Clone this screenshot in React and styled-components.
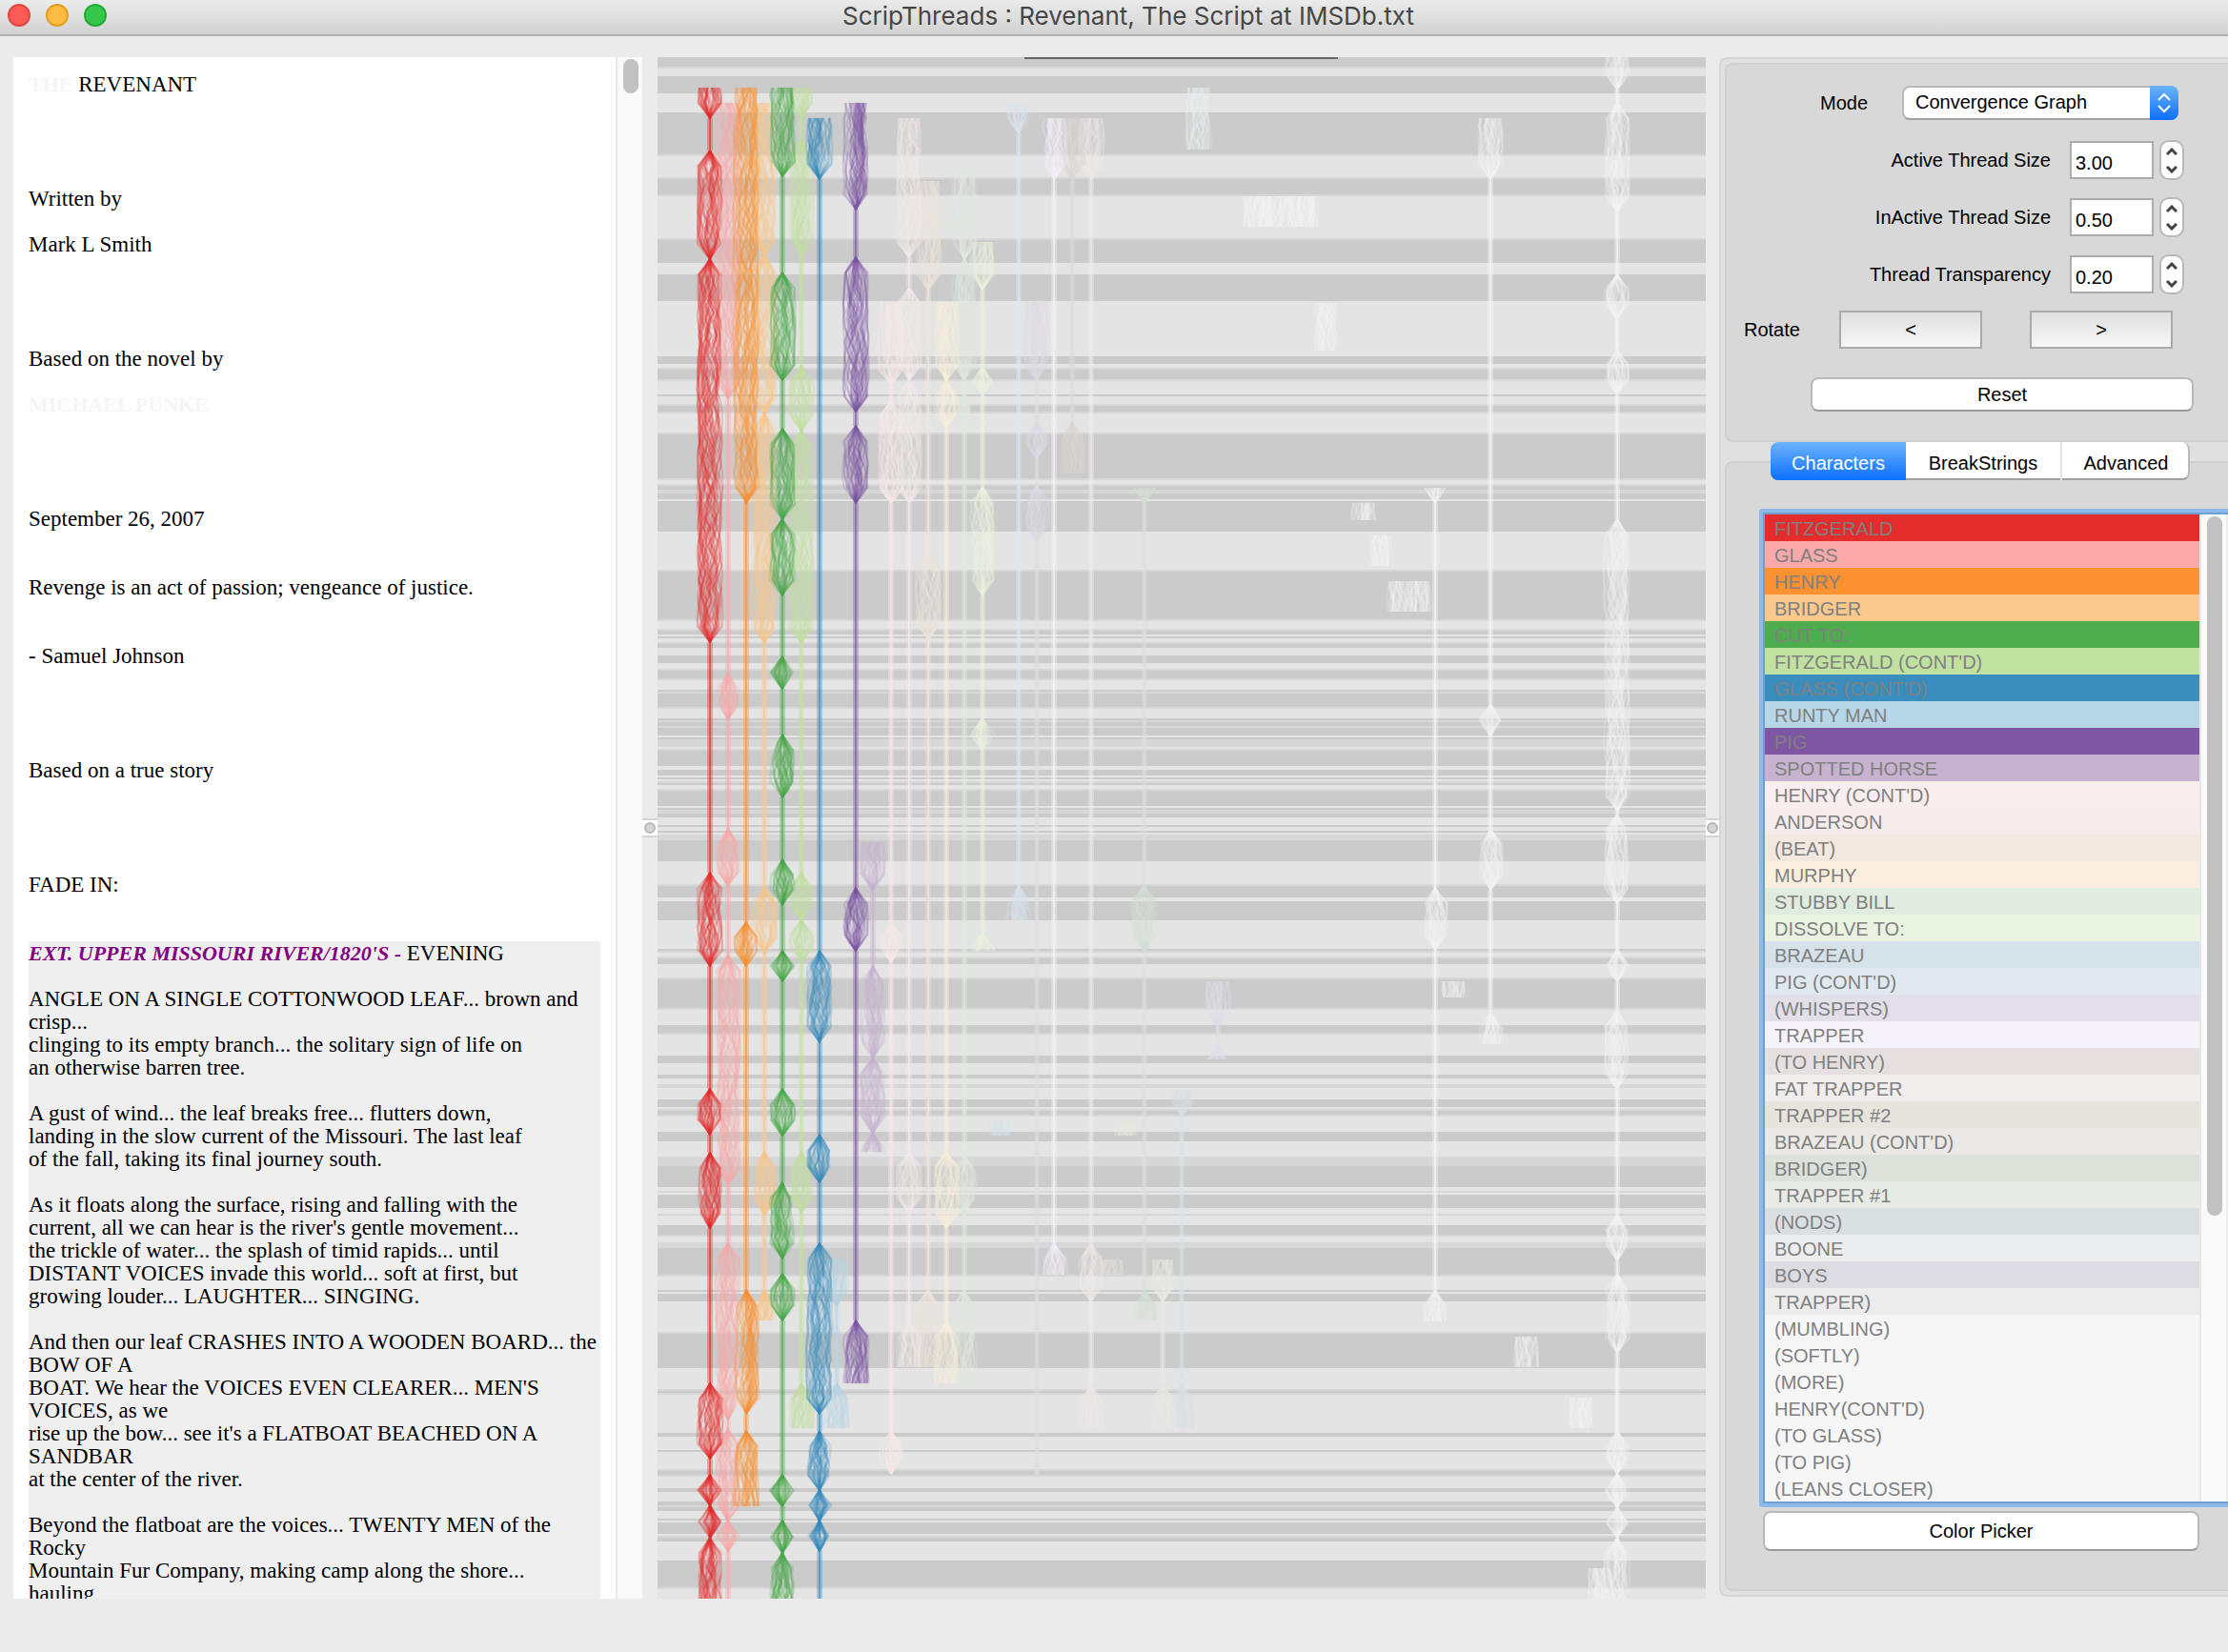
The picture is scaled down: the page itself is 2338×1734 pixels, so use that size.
import React from 'react';
import styled, { createGlobalStyle } from 'styled-components';

const GlobalStyle = createGlobalStyle`
  *, *::before {
    box-sizing: border-box;
  }

  body {
    margin: 0;
    background: #ebebeb;
    font-family: 'Liberation Sans', Arial, sans-serif;
    font-size: 20px;
    color: #000;
  }

  button, input, select {
    font: inherit;
    color: inherit;
    margin: 0;
  }
`;

const Window = styled.div`
  display: flex;
  flex-direction: column;
  height: 100vh;
  min-height: 900px;
  overflow: hidden;
`;

const TitleBar = styled.header`
  display: grid;
  grid-template-columns: 120px 1fr 98px;
  align-items: center;
  flex: none;
  height: 38px;
  padding: 0 0 2px 8px;
  background: linear-gradient(#ebebeb, #d2d2d2);
  border-bottom: 2px solid #b1b1b1;
`;

const Lights = styled.div`
  display: flex;
  gap: 16px;
  padding-bottom: 2px;
`;

const Light = styled.button`
  width: 24px;
  height: 24px;
  padding: 0;
  border: 2px solid ${props => props.$edge};
  border-radius: 50%;
  background: ${props => props.$fill};
`;

const Title = styled.h1`
  margin: 0;
  text-align: center;
  font-family: Inter, 'Liberation Sans', sans-serif;
  font-size: 26px;
  line-height: 32px;
  font-weight: 400;
  color: #464646;
`;

const Main = styled.main`
  display: grid;
  grid-template-columns: 660px 16px minmax(0, 1fr) 14px 534px;
  grid-template-rows: minmax(0, 1fr);
  flex: 1;
  min-height: 0;
  padding: 22px 0 56px 14px;
`;

/* ---------- script pane ---------- */

const ScriptPane = styled.section`
  display: flex;
  min-height: 0;
  overflow: hidden;
  background: #fff;
`;

const Script = styled.div`
  flex: 1;
  padding: 16px;
  overflow: hidden;
  white-space: pre;
  font-family: 'Liberation Serif', 'Times New Roman', serif;
  font-size: 23px;
  line-height: 26px;

  b {
    font-size: 22px;
  }
`;

const Line = styled.p`
  margin: 0;
  height: 24px;
`;

const Faint = styled.b`
  color: #f5f5f5;
`;

const Scene = styled.div`
  background: #efefef;
`;

const Slug = styled.b`
  color: #800080;
  font-style: italic;
`;

const ScrollTrack = styled.div`
  flex: ${props => (props.$fill ? '1' : 'none')};
  width: 28px;
  padding: 2px 0 0 6px;
  background: #fafafa;
  border-left: 2px solid #e8e8e8;
  border-right: ${props => (props.$fill ? '2px solid #ececec' : '0')};
`;

const ScrollThumb = styled.div`
  width: 16px;
  height: ${props => props.$size};
  border-radius: 8px;
  background: #c1c1c1;
`;

const Splitter = styled.div`
  display: flex;
  align-items: center;
`;

const Grip = styled.div`
  display: flex;
  align-items: center;
  justify-content: center;
  width: 100%;
  height: 20px;
  background: #fff;
  border: solid #d4d4d4;
  border-width: 2px 0;

  &::before {
    content: '';
    width: 12px;
    height: 12px;
    border: 2px solid #b8b8b8;
    border-radius: 50%;
    background: #d4d4d4;
  }
`;

/* ---------- graph ---------- */

const Graph = styled.svg`
  display: block;
  width: 100%;
  height: 100%;
`;

/* ---------- control pane ---------- */

const Controls = styled.aside`
  display: flex;
  flex-direction: column;
  min-height: 0;
  margin-bottom: 2px;
  padding: 4px 0 4px 4px;
  background: #e0e0e0;
  border: solid #d6d6d6;
  border-width: 2px 0 2px 2px;
  border-radius: 8px 0 0 8px;
  overflow: hidden;
`;

const Box = styled.div`
  background: #d8d8d8;
  border: solid #cfcfcf;
  border-width: 2px 0 2px 2px;
  border-radius: 8px 0 0 8px;
`;

const Settings = styled(Box)`
  display: flex;
  flex-direction: column;
  flex: none;
  height: 398px;
  padding: 22px 36px 0 18px;
`;

const ModeRow = styled.div`
  display: flex;
  align-items: center;
  justify-content: flex-end;
  gap: 36px;
  height: 36px;
  margin-bottom: 12px;
  padding-right: 16px;
`;

const Row = styled.div`
  display: flex;
  align-items: center;
  justify-content: flex-end;
  height: 60px;
  padding-right: 10px;
`;

const Label = styled.label`
  line-height: 24px;
`;

const SelectBox = styled.div`
  position: relative;
  width: 290px;
  height: 36px;
`;

const Select = styled.select`
  width: 100%;
  height: 100%;
  padding: 0 36px 2px 12px;
  appearance: none;
  background: #fff;
  border: 2px solid #b9b9b9;
  border-bottom-color: #a0a0a0;
  border-radius: 8px;
`;

const SelectArrow = styled.svg`
  position: absolute;
  top: 0;
  right: 0;
  width: 30px;
  height: 36px;
  border-radius: 0 8px 8px 0;
  background: linear-gradient(#6cb3fa, #0b70ff);
  pointer-events: none;
`;

const NumberInput = styled.input`
  width: 88px;
  height: 40px;
  margin: 0 6px 0 20px;
  padding: 6px 0 0 4px;
  background: #fff;
  border: 2px solid #acacac;
`;

const Stepper = styled.div`
  display: flex;
  flex-direction: column;
  width: 26px;
  height: 42px;
  background: #fff;
  border: 2px solid #b9b9b9;
  border-radius: 10px;
  overflow: hidden;
`;

const Step = styled.button`
  display: flex;
  align-items: center;
  justify-content: center;
  flex: 1;
  padding: 0;
  border: 0;
  background: none;
`;

const RotateRow = styled.div`
  display: grid;
  grid-template-columns: 100px 150px 150px;
  align-items: center;
  height: 40px;
  margin-top: 8px;

  button:last-child {
    margin-left: 50px;
  }
`;

const FlatButton = styled.button`
  width: 150px;
  height: 40px;
  padding: 0;
  background: linear-gradient(#dfdfdf, #f7f7f7);
  border: 2px solid #aaa;
`;

const PushButton = styled.button`
  width: ${props => props.$width};
  height: ${props => props.$height || '36px'};
  padding: 0;
  background: #fff;
  border: 2px solid #b9b9b9;
  border-bottom-color: #9b9b9b;
  border-radius: 8px;
`;

const ResetRow = styled.div`
  display: flex;
  justify-content: flex-end;
  margin-top: 30px;
`;

const TabArea = styled.div`
  display: flex;
  flex-direction: column;
  flex: 1;
  min-height: 0;
`;

const Tabs = styled.div`
  position: relative;
  display: flex;
  flex: none;
  width: 440px;
  height: 40px;
  margin: 0 0 -20px 48px;
  border-radius: 8px;
  background: #fff;
  border-bottom: 2px solid #a0a0a0;
  border-right: 2px solid #b9b9b9;
`;

const Tab = styled.button`
  flex: 0 0 ${props => props.$width};
  height: 40px;
  padding: 4px 0 0;
  border: 0;
  border-right: ${props => (props.$divided ? '2px solid #e4e4e4' : '0')};
  border-radius: ${props => (props.$active ? '8px 0 0 8px' : '0')};
  background: ${props => (props.$active ? 'linear-gradient(#6cb3fa, #0b70ff)' : 'none')};
  color: ${props => (props.$active ? '#fff' : '#000')};
`;

const TabPanel = styled(Box)`
  display: flex;
  flex-direction: column;
  flex: 1;
  min-height: 0;
  padding: 48px 0 0 34px;
`;

const ListFrame = styled.div`
  display: flex;
  flex: none;
  padding: 2px 0 2px 2px;
  background: #709fd2;
  border: solid #8db9e8;
  border-width: 4px 0 4px 4px;
  border-radius: 4px 0 0 4px;
`;

const List = styled.ul`
  flex: 0 0 456px;
  margin: 0;
  padding: 0;
  list-style: none;
`;

const Item = styled.li`
  height: 28px;
  padding: 2px 0 0 10px;
  line-height: 26px;
  color: #808080;
  background: ${props => props.$color};
`;

const PickerRow = styled.div`
  margin: 4px 0 0 4px;
`;

const opening = [
  <><Faint>THE</Faint> REVENANT</>, '', '', '', '',
  'Written by', '',
  'Mark L Smith', '', '', '', '',
  'Based on the novel by', '',
  <Faint>MICHAEL PUNKE</Faint>, '', '', '', '',
  'September 26, 2007', '', '',
  'Revenge is an act of passion; vengeance of justice.', '', '',
  '- Samuel Johnson', '', '', '', '',
  'Based on a true story', '', '', '', '',
  'FADE IN:', '', '',
];

const scene = [
  <><Slug>EXT. UPPER MISSOURI RIVER/1820'S -</Slug> EVENING</>, '',
  'ANGLE ON A SINGLE COTTONWOOD LEAF... brown and',
  'crisp...',
  'clinging to its empty branch... the solitary sign of life on',
  'an otherwise barren tree.', '',
  'A gust of wind... the leaf breaks free... flutters down,',
  'landing in the slow current of the Missouri. The last leaf',
  'of the fall, taking its final journey south.', '',
  'As it floats along the surface, rising and falling with the',
  "current, all we can hear is the river's gentle movement...",
  'the trickle of water... the splash of timid rapids... until',
  'DISTANT VOICES invade this world... soft at first, but',
  'growing louder... LAUGHTER... SINGING.', '',
  'And then our leaf CRASHES INTO A WOODEN BOARD... the',
  'BOW OF A',
  "BOAT. We hear the VOICES EVEN CLEARER... MEN'S",
  'VOICES, as we',
  "rise up the bow... see it's a FLATBOAT BEACHED ON A",
  'SANDBAR',
  'at the center of the river.', '',
  'Beyond the flatboat are the voices... TWENTY MEN of the',
  'Rocky',
  'Mountain Fur Company, making camp along the shore...',
  'hauling',
];

const characters = [
  ['FITZGERALD', '#e42c2c'],
  ['GLASS', '#f9a9a9'],
  ['HENRY', '#fc9132'],
  ['BRIDGER', '#fac88c'],
  ['CUT TO:', '#4dac4d'],
  ["FITZGERALD (CONT'D)", '#c1e1a1'],
  ["GLASS (CONT'D)", '#398ebe'],
  ['RUNTY MAN', '#b7d6e7'],
  ['PIG', '#7f56a4'],
  ['SPOTTED HORSE', '#c7b3d0'],
  ["HENRY (CONT'D)", '#f9eded'],
  ['ANDERSON', '#f7ecec'],
  ['(BEAT)', '#f2e8e0'],
  ['MURPHY', '#faeede'],
  ['STUBBY BILL', '#e0ece0'],
  ['DISSOLVE TO:', '#eaf3e1'],
  ['BRAZEAU', '#d5e2ea'],
  ["PIG (CONT'D)", '#e0e9ef'],
  ['(WHISPERS)', '#e2dfe9'],
  ['TRAPPER', '#f6f2fa'],
  ['(TO HENRY)', '#e5e0df'],
  ['FAT TRAPPER', '#f1edec'],
  ['TRAPPER #2', '#e7e4de'],
  ["BRAZEAU (CONT'D)", '#eae9e5'],
  ['BRIDGER)', '#dce1da'],
  ['TRAPPER #1', '#e8ebe5'],
  ['(NODS)', '#dadfe2'],
  ['BOONE', '#ecedef'],
  ['BOYS', '#dddce2'],
  ['TRAPPER)', '#ececec'],
  ['(MUMBLING)', '#f6f6f6'],
  ['(SOFTLY)', '#f6f6f6'],
  ['(MORE)', '#f6f6f6'],
  ["HENRY(CONT'D)", '#f6f6f6'],
  ['(TO GLASS)', '#f6f6f6'],
  ['(TO PIG)', '#f6f6f6'],
  ['(LEANS CLOSER)', '#f6f6f6'],
];

// scene bands: start of each band followed by its tone (Dark, Mid, Light)
const tones = { D: '#cbcbcb', M: '#d7d7d7', L: '#e4e4e4' };
const bands = `60D 70M 72L 80D 98L 118D 162M 164L 186M 188D 204M 206L 250M 252D 276L 288D 316L
374D 382L 386M 388D 398M 400L 414D 416L 424M 426D 432M 434L 454M 456D 502M 504L 508M 510D 514M
518D 524L 526D 558L 598M 600D 650M 652L 660M 662D 666L 668D 670L 674M 676D 680L 688D 696L 702M
704D 712M 714L 724D 726M 728D 742M 744L 754D 756M 758D 762M 764D 772L 774D 776M 784L 786M 788D
804L 808D 814L 816D 818L 820M 822D 824L 828M 830D 846L 848D 850M 854D 858L 866D 868L 872D 874L
876M 882D 904L 928M 930D 942L 946D 966L 996D 998M 1000L 1004M 1006D 1012L 1026M 1028D 1058M
1060L 1076D 1084M 1086L 1108D 1116L 1128D 1132L 1138M 1142L 1154D 1162L 1164M 1166D 1170M 1172L
1188D 1198L 1214M 1224D 1246L 1250M 1252L 1254D 1268L 1274M 1276L 1286D 1296M 1298L 1304M 1310D
1338M 1340L 1354D 1356L 1358D 1366L 1398M 1400D 1436L 1458M 1460D 1462M 1464L 1504D 1508L 1522D
1524L 1542M 1544D 1548M 1550L 1562D 1566L 1576D 1580M 1582D 1586L 1594D 1596L 1598D 1610L 1612M
1614D 1618L 1638D 1666M 1668L`.split(/\s+/).map(b => [parseInt(b, 10), b.slice(-1)]);

const TOP = 60;
const BOTTOM = 1678;
const LEFT = 690;

// x, colour, [start, end] of every active run, and which outer ends stay open
const threads = [
  { x: 1258, color: '#eceeef', runs: [[92, 157]], open: 'both' },
  { x: 1278, color: '#e2dfe9', runs: [[1030, 1077], [1098, 1112]], open: 'both' },
  { x: 1316, color: '#f6f6f6', runs: [[206, 238]], open: 'both' },
  { x: 1335, color: '#f6f6f6', runs: [[206, 238]], open: 'both' },
  { x: 1354, color: '#f6f6f6', runs: [[206, 238]], open: 'both' },
  { x: 1373, color: '#f6f6f6', runs: [[206, 238]], open: 'both' },
  { x: 1392, color: '#f6f6f6', runs: [[318, 368]], open: 'both' },
  { x: 1431, color: '#f6f6f6', runs: [[528, 546]], open: 'both' },
  { x: 1448, color: '#f6f6f6', runs: [[562, 594]], open: 'both' },
  { x: 1469, color: '#f6f6f6', runs: [[610, 642]], open: 'both' },
  { x: 1489, color: '#f6f6f6', runs: [[610, 642]], open: 'both' },
  { x: 1525, color: '#f6f6f6', runs: [[1030, 1047]], open: 'both' },
  { x: 1602, color: '#f6f6f6', runs: [[1403, 1435]], open: 'both' },
  { x: 1659, color: '#f6f6f6', runs: [[1467, 1499]], open: 'both' },
  { x: 1679, color: '#f6f6f6', runs: [[1646, 1678]], open: 'both' },
  { x: 1048, color: '#d5e6ea', runs: [[1177, 1192]], open: 'both' },
  { x: 1182, color: '#e9ece0', runs: [[1177, 1192]], open: 'both' },
  { x: 1166, color: '#e4e1dd', runs: [[1322, 1338]], open: 'both' },
  { x: 1697, color: '#f6f6f6', runs: [[60, 94], [108, 222], [288, 335], [367, 414], [545, 852], [855, 948], [996, 1030], [1061, 1143], [1275, 1323], [1337, 1420], [1502, 1547], [1547, 1582], [1582, 1614], [1614, 1678]], open: 'both' },
  { x: 1564, color: '#f6f6f6', runs: [[124, 188], [739, 773], [870, 934], [1062, 1096]], open: 'both' },
  { x: 1506, color: '#f6f6f6', runs: [[512, 528], [932, 997], [1354, 1387]], open: 'both' },
  { x: 1240, color: '#dae3e6', runs: [[1144, 1172], [1454, 1499]], open: 'both' },
  { x: 1220, color: '#e9ece6', runs: [[1322, 1366], [1454, 1499]], open: 'both' },
  { x: 1201, color: '#d9e2d9', runs: [[512, 528], [929, 998], [1355, 1386]], open: 'both' },
  { x: 1145, color: '#f1ecec', runs: [[124, 188], [1305, 1366], [1454, 1499]], open: 'both' },
  { x: 1125, color: '#e0d9d9', runs: [[124, 188], [444, 497]], open: 'both' },
  { x: 1106, color: '#f6f2fa', runs: [[124, 188], [1305, 1338]], open: 'both' },
  { x: 1088, color: '#e0dce8', runs: [[317, 399], [444, 481], [510, 568]], open: 'top', end: 1548 },
  { x: 1069, color: '#dce8ee', runs: [[108, 140], [930, 966]], open: 'both' },
  { x: 1031, color: '#eaf3e1', runs: [[254, 304], [385, 415], [511, 625], [754, 788], [979, 998]], open: 'both' },
  { x: 1012, color: '#dfebdf', runs: [[174, 272], [272, 399], [415, 440], [1213, 1273], [1355, 1452]], open: 'both' },
  { x: 993, color: '#faeede', runs: [[317, 399], [399, 449], [1209, 1289], [1387, 1452]], open: 'both' },
  { x: 974, color: '#f2e6dc', runs: [[190, 304], [583, 671], [1354, 1435]], open: 'both' },
  { x: 954, color: '#f7eaea', runs: [[124, 270], [302, 399], [399, 528], [1209, 1273], [1387, 1435]], open: 'both' },
  { x: 935, color: '#f9eaea', runs: [[317, 404], [420, 528], [968, 1010], [1502, 1547]], open: 'top' },
  { x: 916, color: '#c7b3d0', runs: [[884, 934], [1014, 1110], [1110, 1189], [1189, 1209]], open: 'both' },
  { x: 878, color: '#b7d6e7', runs: [[1322, 1371], [1452, 1499]], open: 'both' },
  { x: 841, color: '#c1e1a1', runs: [[92, 124], [147, 268], [385, 452], [452, 675], [916, 966], [966, 1010], [1209, 1273], [1452, 1499]], open: 'both' },
  { x: 802, color: '#fac88c', runs: [[108, 268], [268, 434], [434, 675], [932, 1000], [1209, 1275], [1354, 1386]], open: 'both' },
  { x: 764, color: '#f9a9a9', runs: [[108, 418], [707, 755], [870, 930], [1003, 1243], [1305, 1490], [1500, 1596], [1596, 1628]], open: 'top', end: 1678 },
  { x: 898, color: '#7f56a4', runs: [[108, 220], [270, 432], [447, 528], [932, 998], [1386, 1452]], open: 'both' },
  { x: 860, color: '#398ebe', runs: [[124, 188], [998, 1094], [1191, 1241], [1305, 1484], [1502, 1564], [1564, 1596], [1596, 1628]], open: 'top', end: 1678 },
  { x: 821, color: '#4dac4d', runs: [[92, 185], [286, 399], [450, 545], [545, 625], [689, 723], [771, 837], [902, 950], [998, 1030], [1143, 1192], [1241, 1321], [1337, 1386], [1548, 1581], [1596, 1630], [1630, 1678]], open: 'both' },
  { x: 783, color: '#fc9132', runs: [[92, 528], [968, 1014], [1354, 1484], [1502, 1581]], open: 'both' },
  { x: 745, color: '#e42c2c', runs: [[92, 124], [158, 272], [272, 674], [916, 1014], [1143, 1191], [1210, 1289], [1452, 1531], [1548, 1580], [1580, 1614], [1614, 1678]], open: 'both' },
];

function random(seed) {
  let s = seed;
  return () => {
    s = (s * 16807) % 2147483647;
    return s / 2147483647;
  };
}

// one run of a thread: loose strands that meet on the resting line unless an end is open
function strands(x, y0, y1, openTop, openBottom) {
  const next = random(x * 31 + y0 * 7);
  const steps = Math.max(2, Math.round((y1 - y0) / 8));
  const paths = [];
  for (let n = 0; n < 42; n++) {
    // every third strand keeps close to the middle
    const home = (next() * 2 - 1) * (n % 3 ? 15 : 6);
    let drift = 0;
    const points = [];
    for (let i = 0; i <= steps; i++) {
      const y = y0 + ((y1 - y0) * i) / steps;
      const fromTop = openTop ? 1 : (y - y0) / 16;
      const fromBottom = openBottom ? 1 : (y1 - y) / 16;
      const spread = Math.min(1, fromTop, fromBottom);
      const offset = 15 * Math.tanh((home + drift) / 15);
      points.push(`${(x + offset * spread).toFixed(1)} ${y.toFixed(1)}`);
      drift = drift * 0.8 + (next() * 2 - 1) * 5;
    }
    paths.push(`M${points.join('L')}`);
  }
  return paths;
}

function Thread({ x, color, runs, open, end }) {
  const last = runs.length - 1;
  const rests = runs
    .map((run, i) => [run[1], i < last ? runs[i + 1][0] : end || run[1]])
    .filter(([from, to]) => to > from);
  return (
    <g stroke={color} fill="none" strokeLinejoin="round">
      {rests.map(([from, to]) => (
        <g key={from}>
          <path d={`M${x} ${from}V${to}`} strokeWidth="6" opacity="0.36" />
          <path d={`M${x} ${from}V${to}`} strokeWidth="2" opacity="0.6" />
        </g>
      ))}
      {runs.map(([from, to], i) =>
        strands(x, from, to, i === 0, i === last && open === 'both').map((d, n) => (
          <path key={`${from}-${n}`} d={d} strokeWidth="2" opacity="0.2" />
        ))
      )}
    </g>
  );
}

function ThreadGraph() {
  return (
    <Graph
      viewBox={`${LEFT} ${TOP} 1100 ${BOTTOM - TOP}`}
      preserveAspectRatio="none"
      role="img"
      aria-label="Convergence graph"
    >
      <g shapeRendering="crispEdges">
        {bands.map(([y, tone], i) => (
          <rect
            key={y}
            x={LEFT}
            y={y}
            width="1100"
            height={(i + 1 < bands.length ? bands[i + 1][0] : BOTTOM) - y}
            fill={tones[tone]}
          />
        ))}
      </g>
      {threads.map(thread => <Thread key={thread.x} {...thread} />)}
      <rect x="1075" y="60" width="329" height="2" fill="#666" />
    </Graph>
  );
}

function SpinRow({ id, label, value }) {
  return (
    <Row>
      <Label htmlFor={id}>{label}</Label>
      <NumberInput id={id} defaultValue={value} />
      <Stepper>
        <Step aria-label={`Increase ${label}`}>
          <svg width="12" height="8" viewBox="0 0 12 8" fill="none" stroke="#444" strokeWidth="3">
            <path d="M1 7l5-5 5 5" />
          </svg>
        </Step>
        <Step aria-label={`Decrease ${label}`}>
          <svg width="12" height="8" viewBox="0 0 12 8" fill="none" stroke="#444" strokeWidth="3">
            <path d="M1 1l5 5 5-5" />
          </svg>
        </Step>
      </Stepper>
    </Row>
  );
}

function App() {
  return (
    <>
      <GlobalStyle />
      <Window>
        <TitleBar>
          <Lights>
            <Light aria-label="Close" $fill="#fc5b57" $edge="#e2443f" />
            <Light aria-label="Minimize" $fill="#fdbc40" $edge="#dfa023" />
            <Light aria-label="Zoom" $fill="#34c84a" $edge="#24aa34" />
          </Lights>
          <Title>ScripThreads : Revenant, The Script at IMSDb.txt</Title>
        </TitleBar>
        <Main>
          <ScriptPane>
            <Script>
              {opening.map((line, i) => <Line key={i}>{line}</Line>)}
              <Scene>
                {scene.map((line, i) => <Line key={i}>{line}</Line>)}
              </Scene>
            </Script>
            <ScrollTrack><ScrollThumb $size="36px" /></ScrollTrack>
          </ScriptPane>
          <Splitter><Grip /></Splitter>
          <ThreadGraph />
          <Splitter><Grip /></Splitter>
          <Controls>
            <Settings>
              <ModeRow>
                <Label htmlFor="mode">Mode</Label>
                <SelectBox>
                  <Select id="mode">
                    <option>Convergence Graph</option>
                  </Select>
                  <SelectArrow viewBox="0 0 30 36" fill="none" stroke="#fff" strokeWidth="2">
                    <path d="M9 15l6-6 6 6M9 21l6 6 6-6" />
                  </SelectArrow>
                </SelectBox>
              </ModeRow>
              <SpinRow id="active" label="Active Thread Size" value="3.00" />
              <SpinRow id="inactive" label="InActive Thread Size" value="0.50" />
              <SpinRow id="transparency" label="Thread Transparency" value="0.20" />
              <RotateRow>
                <span>Rotate</span>
                <FlatButton aria-label="Rotate left">&lt;</FlatButton>
                <FlatButton aria-label="Rotate right">&gt;</FlatButton>
              </RotateRow>
              <ResetRow><PushButton $width="402px">Reset</PushButton></ResetRow>
            </Settings>
            <TabArea>
              <Tabs role="tablist">
                <Tab role="tab" aria-selected="true" $width="142px" $active>Characters</Tab>
                <Tab role="tab" aria-selected="false" $width="164px" $divided>BreakStrings</Tab>
                <Tab role="tab" aria-selected="false" $width="134px">Advanced</Tab>
              </Tabs>
              <TabPanel>
                <ListFrame>
                  <List>
                    {characters.map(([name, color]) => (
                      <Item key={name} $color={color}>{name}</Item>
                    ))}
                  </List>
                  <ScrollTrack $fill><ScrollThumb $size="734px" /></ScrollTrack>
                </ListFrame>
                <PickerRow>
                  <PushButton $width="458px" $height="42px">Color Picker</PushButton>
                </PickerRow>
              </TabPanel>
            </TabArea>
          </Controls>
        </Main>
      </Window>
    </>
  );
}

export default App;
